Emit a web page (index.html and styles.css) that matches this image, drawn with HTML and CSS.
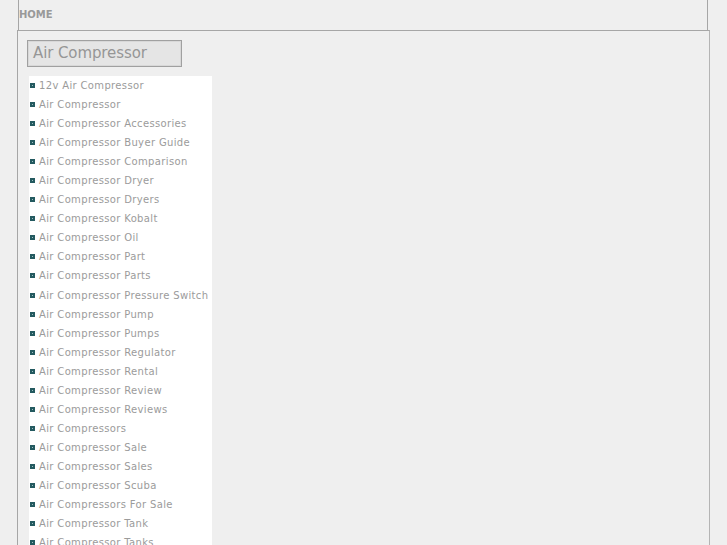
FILE: index.html
```html
<!DOCTYPE html>
<html>
<head>
<meta charset="utf-8">
<link rel="stylesheet" href="styles.css">
</head>
<body>
<div class="top"><a class="home" href="#">HOME</a></div>
<div class="main">
  <div class="title">Air Compressor</div>
  <ul class="list">
    <li>12v Air Compressor</li>
    <li>Air Compressor</li>
    <li>Air Compressor Accessories</li>
    <li>Air Compressor Buyer Guide</li>
    <li>Air Compressor Comparison</li>
    <li>Air Compressor Dryer</li>
    <li>Air Compressor Dryers</li>
    <li>Air Compressor Kobalt</li>
    <li>Air Compressor Oil</li>
    <li>Air Compressor Part</li>
    <li>Air Compressor Parts</li>
    <li>Air Compressor Pressure Switch</li>
    <li>Air Compressor Pump</li>
    <li>Air Compressor Pumps</li>
    <li>Air Compressor Regulator</li>
    <li>Air Compressor Rental</li>
    <li>Air Compressor Review</li>
    <li>Air Compressor Reviews</li>
    <li>Air Compressors</li>
    <li>Air Compressor Sale</li>
    <li>Air Compressor Sales</li>
    <li>Air Compressor Scuba</li>
    <li>Air Compressors For Sale</li>
    <li>Air Compressor Tank</li>
    <li>Air Compressor Tanks</li>
  </ul>
</div>
</body>
</html>
```
FILE: styles.css
```css
html, body {
  margin: 0;
  padding: 0;
  background: #efefef;
  font-family: "DejaVu Sans", Verdana, sans-serif;
}
.top {
  margin-left: 18px;
  width: 688px;
  height: 30px;
  border-left: 1px solid #a6a6a6;
  border-right: 1px solid #a6a6a6;
  display: flex;
  align-items: center;
}
.home {
  font-size: 10px;
  font-weight: bold;
  color: #999;
  text-decoration: none;
  margin-top: -1px;
}
.main {
  margin-left: 17px;
  width: 693px;
  height: 520px;
  border-top: 1px solid #a6a6a6;
  border-left: 1px solid #a6a6a6;
  border-right: 1px solid #b4b4b4;
  padding: 9px 0 0 9px;
  box-sizing: border-box;
}
.title {
  width: 155px;
  height: 27px;
  box-sizing: border-box;
  background: #e5e5e5;
  border: 1px solid #a0a0a0;
  box-shadow: inset 0 0 0 1px #d8d8d8;
  color: #969696;
  font-size: 15px;
  line-height: 25px;
  padding-left: 5px;
  letter-spacing: -0.1px;
}
.list {
  list-style: none;
  margin: 9px 0 0 2px;
  padding: 0;
  width: 183px;
  background: #fff;
}
.list li {
  font-size: 10px;
  line-height: 19.05px;
  height: 19.05px;
  color: #9b9b9b;
  display: flex;
  align-items: center;
  padding-left: 1px;
  white-space: nowrap;
  letter-spacing: 0.35px;
}
.list li::before {
  content: "";
  width: 1px;
  height: 1px;
  background: #9ec0c2;
  border: 2px solid #245a60;
  margin-right: 4px;
  flex: none;
}
```
